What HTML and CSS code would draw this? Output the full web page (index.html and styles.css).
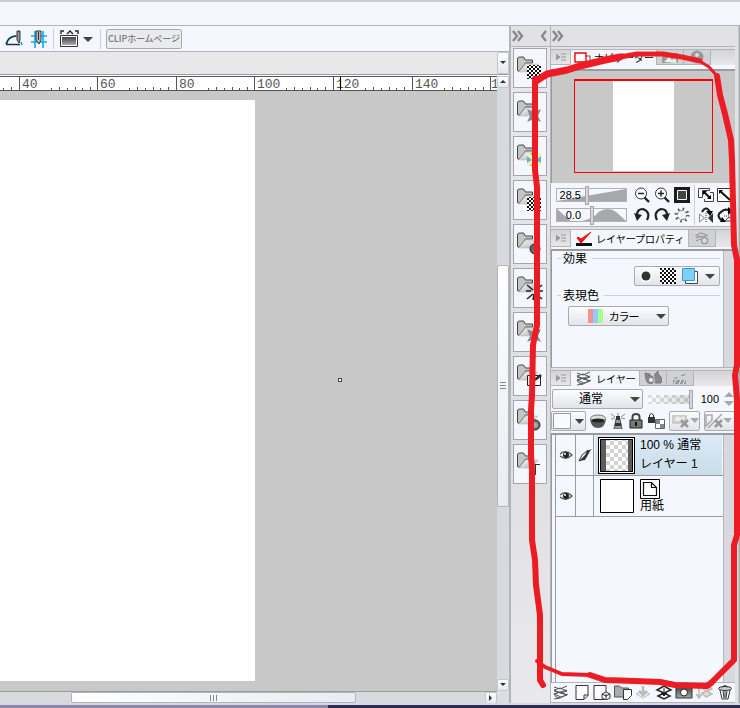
FILE: index.html
```html
<!DOCTYPE html>
<html lang="ja">
<head>
<meta charset="utf-8">
<title>レイヤー</title>
<link rel="stylesheet" href="styles.css">
</head>
<body>
<svg class="defs" aria-hidden="true">
  <defs>
    <linearGradient id="fold" x1="0" y1="0" x2="1" y2="1"><stop offset="0" stop-color="#fff"/><stop offset="1" stop-color="#aaa"/></linearGradient>
    <linearGradient id="dark" x1="0" y1="0" x2="0" y2="1"><stop offset="0" stop-color="#444"/><stop offset="1" stop-color="#aaa"/></linearGradient>
    <pattern id="check" width="4" height="4" patternUnits="userSpaceOnUse"><rect width="4" height="4" fill="#fff"/><path d="M0 0h2v2H0zM2 2h2v2H2z" fill="#111"/></pattern>
    <pattern id="pale" width="8" height="8" patternUnits="userSpaceOnUse"><rect width="8" height="8" fill="#fff"/><path d="M0 0h4v4H0zM4 4h4v4H4z" fill="#d2d2d2"/></pattern>
    <symbol id="folder" viewBox="0 0 34 40"><path d="M4.500 22V11q0-2 2-2h4l2 3h7v3h-7L7 23H5z" fill="#c4c4c4" stroke="#444"/><path d="M6 24l6-8h13l-6 8z" fill="url(#fold)" stroke="#bbb" stroke-width=".6"/><path d="M5 24l8-9" stroke="#888"/></symbol>
    <symbol id="ticks" viewBox="0 0 78 14"><path d="M31.500 11v2M39.500 10v3M47.500 11v2M55.500 10v3M62.500 11v2M70.500 10v3" stroke="#555"/></symbol>
    <symbol id="chev" viewBox="0 0 12 12"><path d="M1 1l4 5-4 5M6 1l4 5-4 5" fill="none" stroke="#888a8e" stroke-width="2.400"/></symbol>
    <symbol id="menu" viewBox="0 0 10 9"><path d="M0 1l4 3-4 3zM5 1h5M5 4h5M5 7h5" fill="#999" stroke="#999" stroke-width="1"/></symbol>
    <symbol id="eye" viewBox="0 0 14 10"><path d="M1 4Q7-1 13 5 7 11 1 6" fill="#eee" stroke="#555" stroke-width="1.200"/><circle cx="7" cy="5" r="3" fill="#222"/><circle cx="6" cy="4" r="1" fill="#fff"/></symbol>
    <symbol id="layers" viewBox="0 0 18 15"><path d="M2 2l6 2 7-3M2 5l6-2 7 3-6 2-7-3zM2 9l6-2 7 3-6 2zM2 6l13 4M15 5L2 9l2 3 4 1 8-4M8 13l-6 1" fill="none" stroke="#555" stroke-width="1"/></symbol>
  </defs>
</svg>

<header class="titlebar"></header>
<main class="app">
  <section class="document">
    <div class="toolbar">
      <button class="tool" aria-label="特殊定規にスナップ"><svg width="20" height="18" viewBox="0 0 20 18"><path d="M2 15Q2 5 13 6M16 12l1 3" fill="none" stroke="#0c9be8" stroke-width="1.500"/><path d="M1 14q2-7 10-8M1 14.500h14" fill="none" stroke="#234" stroke-width="1.600"/><path d="M12 1h3v9l-1 3-2-3z" fill="#999" stroke="#333"/></svg></button>
      <button class="tool" aria-label="グリッドにスナップ"><svg width="18" height="18" viewBox="0 0 18 18"><path d="M1 6h16M1 12h16M5 1v17M13 1v17" stroke="#0cabf5" stroke-width="1.600"/><path d="M6 1h5v9l-2 4-3-4z" fill="#bbb" stroke="#333"/><path d="M8.500 2v8" stroke="#333"/></svg></button>
      <i class="divider"></i>
      <button class="tool wide" aria-label="表示設定"><svg width="34" height="18" viewBox="0 0 34 18"><path d="M2 4V1h3M19 4V1h-3M8 4l3-3 3 3" fill="none" stroke="#222" stroke-width="1.400"/><path d="M1.500 5.500h17v11h-17z" fill="#fff" stroke="#333"/><path d="M3 7h14v8H3z" fill="url(#dark)"/><path d="M24 7h10l-5 5z" fill="#444"/></svg></button>
      <i class="divider"></i>
      <button class="home">CLIPホームページ</button>
    </div>
    <div class="doctabs"><button class="tiny" aria-label="タブ一覧"><svg width="6" height="4"><path d="M0 0h6L3 3z" fill="#333"/></svg></button></div>
    <div class="workspace">
      <div class="view">
        <div class="ruler">
          <span class="mark"><svg><use href="#ticks" x="-59" width="78" height="14"/></svg></span>
          <span class="mark"><svg><use href="#ticks" width="78" height="14"/></svg>40</span>
          <span class="mark"><svg><use href="#ticks" width="78" height="14"/></svg>60</span>
          <span class="mark"><svg><use href="#ticks" width="78" height="14"/></svg>80</span>
          <span class="mark"><svg><use href="#ticks" width="78" height="14"/></svg>100</span>
          <span class="mark"><svg><use href="#ticks" width="78" height="14"/></svg>120</span>
          <span class="mark"><svg><use href="#ticks" width="78" height="14"/></svg>140</span>
          <span class="mark last">1</span>
          <i class="position"></i>
        </div>
        <div class="canvas"><div class="page"></div><i class="cursor"></i></div>
      </div>
      <div class="vscroll">
        <button class="tiny" aria-label="上へ"><svg width="6" height="4"><path d="M0 3h6L3 0z" fill="#333"/></svg></button>
        <div class="vtrack"><i></i><div class="thumb"><svg width="6" height="8"><path d="M0 .5h6M0 3.500h6M0 6.500h6" stroke="#888"/></svg></div></div>
        <button class="tiny" aria-label="下へ"><svg width="6" height="4"><path d="M0 0h6L3 3z" fill="#333"/></svg></button>
      </div>
      <div class="hscroll">
        <div class="htrack"><i></i><div class="thumb"><svg width="8" height="6"><path d="M.5 0v6M3.500 0v6M6.500 0v6" stroke="#888"/></svg></div></div>
        <button class="tiny" aria-label="右へ"><svg width="4" height="6"><path d="M0 0v6l3-3z" fill="#333"/></svg></button>
      </div>
      <div class="corner"></div>
    </div>
  </section>

  <nav class="strip">
    <div class="dockhead"><svg width="12" height="12"><use href="#chev"/></svg><svg width="6" height="12" viewBox="0 0 6 12"><path d="M5 1L1 6l4 5" fill="none" stroke="#888a8e" stroke-width="2.400"/></svg></div>
    <div class="materials">
      <button aria-label="単色パターン"><svg viewBox="0 0 34 40"><use href="#folder"/><path d="M14 17h14v14H14z" fill="url(#check)"/></svg></button>
      <button aria-label="素材"><svg viewBox="0 0 34 40"><use href="#folder"/><path d="M14 17l7 3 7-3-3 7 3 6-7-3-7 3 3-6z" fill="#888"/></svg></button>
      <button aria-label="カラーパターン"><svg viewBox="0 0 34 40"><use href="#folder"/><path d="M14 17h14v13H14z" fill="#4db8ee"/><path d="M14 17h3l4 5 4-5h3v3l-5 4 5 3v3h-3l-4-4-4 4h-3v-3l5-3-5-4z" fill="#fff0a8"/></svg></button>
      <button aria-label="モノクロパターン"><svg viewBox="0 0 34 40"><use href="#folder"/><path d="M14 17h14v14H14z" fill="url(#check)"/></svg></button>
      <button aria-label="画像素材"><svg viewBox="0 0 34 40"><use href="#folder"/><circle cx="22" cy="25" r="5" fill="#666" stroke="#222"/></svg></button>
      <button aria-label="漫画素材"><svg viewBox="0 0 34 40"><use href="#folder"/><path d="M14 17l6 5M29 17l-6 5M14 31l6-5M29 31l-6-5M13 23h5M21 30v-4M25 23h5M20 32l1-5" stroke="#222" stroke-width="1.600"/></svg></button>
      <button aria-label="ポーズ"><svg viewBox="0 0 34 40"><use href="#folder"/><path d="M14 17l7 3 7-3-3 7 3 6-7-3-7 3 3-6z" fill="#888"/></svg></button>
      <button aria-label="ブラシ"><svg viewBox="0 0 34 40"><use href="#folder"/><path d="M14.500 19.500h13v10h-13z" fill="#fff" stroke="#222"/><path d="M20 26l2-4 5-4 2 2-5 4z" fill="#333"/></svg></button>
      <button aria-label="3D"><svg viewBox="0 0 34 40"><use href="#folder"/><circle cx="22" cy="25" r="5" fill="#777" stroke="#222"/><circle cx="22" cy="25" r="2.500" fill="#aaa"/></svg></button>
      <button aria-label="ダウンロード"><svg viewBox="0 0 34 40"><use href="#folder"/><path d="M16 20.500h11M22.500 20v11" stroke="#333"/></svg></button>
    </div>
  </nav>

  <aside class="dock">
    <div class="dockhead"><svg width="12" height="12"><use href="#chev"/></svg></div>
    <section class="panel navigator">
      <div class="tabs">
        <button class="menu" aria-label="メニュー"><svg width="10" height="9"><use href="#menu"/></svg></button>
        <button class="tab active"><svg width="17" height="12" viewBox="0 0 17 12"><path d="M11 4h5v6h-5" fill="#fff" stroke="#555"/><path d="M1 1h11v9H1z" fill="#fff" stroke="#f00" stroke-width="1.400"/></svg>ナビゲーター</button>
        <button class="tab" aria-label="サブビュー"><svg width="20" height="12" viewBox="0 0 20 12"><path d="M2 2h16v10H2z" fill="#999"/><path d="M4 11l5-5 3 3 3-2 2 5z" fill="#eee"/></svg></button>
        <button class="tab" aria-label="情報"><svg width="16" height="14" viewBox="0 0 16 14"><circle cx="8" cy="7" r="6.500" fill="#999"/><circle cx="8" cy="5" r="2" fill="#ddd"/><path d="M6 9h4v4H6z" fill="#ddd"/></svg></button>
      </div>
      <div class="preview"><div class="frame"><div class="paper"></div></div></div>
      <div class="controls">
        <div class="sliders">
          <label class="slider"><span>28.5</span><svg viewBox="0 0 70 12" preserveAspectRatio="none"><path d="M0 12L70 0v12z" fill="#a6a8ab"/></svg><input type="range" min="0" max="100" value="43" aria-label="拡大率"></label>
          <label class="slider"><span>0.0</span><svg viewBox="0 0 70 12" preserveAspectRatio="none"><path d="M0 0l14 12H0zM7 12h19Q38 9 42 3 52-3 60 3l10 9z" fill="#a6a8ab"/></svg><input type="range" min="0" max="100" value="50" aria-label="回転"></label>
        </div>
        <div class="navtools">
          <button aria-label="ズームアウト"><svg viewBox="0 0 16 16"><circle cx="7" cy="6.500" r="5.500" fill="#fff" stroke="#333"/><path d="M4 6.500h6" stroke="#222" stroke-width="1.500"/><path d="M10.500 10.500L15 15" stroke="#222" stroke-width="2.400"/></svg></button>
          <button aria-label="ズームイン"><svg viewBox="0 0 16 16"><circle cx="7" cy="6.500" r="5.500" fill="#fff" stroke="#333"/><path d="M4 6.500h6M7 3.500v6" stroke="#222" stroke-width="1.500"/><path d="M10.500 10.500L15 15" stroke="#222" stroke-width="2.400"/></svg></button>
          <button aria-label="全体表示"><svg viewBox="0 0 16 16"><path d="M0 0h16v16H0z" fill="#1c1c1c"/><path d="M3.500 3.500h9v9h-9z" fill="#444" stroke="#fff"/></svg></button>
          <button class="split" aria-label="フィッティング"><svg viewBox="0 0 16 16"><path d="M.5 2.500v-1h11v2h-7v7h-4zM12 5.500h3.500v9H6.500V12" fill="none" stroke="#444"/><path d="M6 5l6 6" stroke="#111" stroke-width="2"/><path d="M5 4h4l-4 4zM13 12H9l4-4z"/></svg></button>
          <button aria-label="ウィンドウに合わせる"><svg viewBox="0 0 16 16"><path d="M.5 1.500h15v13H.5z" fill="#fff" stroke="#333"/><path d="M3 4l10 9" stroke="#111" stroke-width="2"/><path d="M2 3h4l-4 4z"/></svg></button>
          <button aria-label="左回転"><svg viewBox="0 0 16 16"><path d="M3 8q0-6 6-6 8 3 4 11" fill="none" stroke="#222" stroke-width="2.200"/><path d="M0 6l8 2-5 6z" fill="#222"/></svg></button>
          <button aria-label="右回転"><svg viewBox="0 0 16 16"><path d="M13 8q0-6-6-6-8 3-4 11" fill="none" stroke="#222" stroke-width="2.200"/><path d="M16 6L8 8l5 6z" fill="#222"/></svg></button>
          <button aria-label="回転をリセット"><svg viewBox="0 0 16 16"><circle cx="8" cy="8" r="6" fill="none" stroke="#555" stroke-width="3" stroke-dasharray="1.500 3.200"/><circle cx="8" cy="8" r="4.500" fill="none" stroke="#777" stroke-dasharray="2.500 2.200"/></svg></button>
          <button class="split" aria-label="左右反転"><svg viewBox="0 0 16 16"><path d="M8 6v10" stroke="#222" stroke-dasharray="1 1"/><path d="M1.500 7v8l5-4z" fill="#fff" stroke="#888"/><path d="M10 11l5-5v10z" fill="#333"/><path d="M4 5q4-7 8 0" fill="none" stroke="#222" stroke-width="2.200"/><path d="M8 4h7l-3 5z"/></svg></button>
          <button aria-label="上下反転"><svg viewBox="0 0 16 16"><path d="M4 13Q-1 8 4 5q4-4 9-1" fill="none" stroke="#222" stroke-width="2.200"/><path d="M11 0v8l5-4zM3 15h6l-4-5z"/><path d="M7 9h9" stroke="#333" stroke-dasharray="1 1"/><path d="M8 14h8l-4-4z" fill="#fff" stroke="#444"/></svg></button>
        </div>
      </div>
    </section>

    <section class="panel property">
      <div class="tabs">
        <button class="menu" aria-label="メニュー"><svg width="10" height="9"><use href="#menu"/></svg></button>
        <button class="tab active"><svg width="18" height="16" viewBox="0 0 18 16"><path d="M1 12h16v3H1z" fill="#111"/><path d="M2 7l4 5L16 1 6 8 3 6z" fill="#e11" stroke="#e11"/></svg>レイヤープロパティ</button>
        <button class="tab" aria-label="レイヤー検索"><svg width="18" height="13" viewBox="0 0 18 15"><path d="M2 4l6-3 7 3-6 2zM2 7l6-2 5 2M2 10l6-2" fill="none" stroke="#999" stroke-width="1.300"/><circle cx="12" cy="10" r="3.500" fill="#ddd" stroke="#999" stroke-width="1.500"/></svg></button>
      </div>
      <div class="framed">
        <div class="fields">
          <h2>効果</h2>
          <div class="effects">
            <button aria-label="境界効果"><svg width="14" height="14"><circle cx="7" cy="7" r="6" fill="#fff"/><circle cx="7" cy="7" r="4.500" fill="#333"/></svg></button>
            <button aria-label="トーン"><svg width="16" height="16"><path d="M0 0h16v16H0z" fill="url(#check)"/></svg></button>
            <button aria-label="レイヤーカラー"><svg width="16" height="16" viewBox="0 0 16 16"><path d="M3.500 3.500h12v12h-12z" fill="#fff" stroke="#444"/><path d="M.5.500h12v12H.5z" fill="#80d0ff" stroke="#3b9acb"/></svg></button>
            <button aria-label="その他"><svg width="10" height="5"><path d="M0 0h10L5 5z" fill="#444"/></svg></button>
          </div>
          <h2>表現色</h2>
          <div class="colour"><i class="swatch"></i><select aria-label="表現色"><option>カラー</option></select><svg width="10" height="5"><path d="M0 0h10L5 5z" fill="#444"/></svg></div>
        </div>
        <div class="gutter"></div>
      </div>
    </section>

    <section class="panel layers">
      <div class="tabs">
        <button class="menu" aria-label="メニュー"><svg width="10" height="9"><use href="#menu"/></svg></button>
        <button class="tab active"><svg width="18" height="15"><use href="#layers"/></svg>レイヤー</button>
        <button class="tab" aria-label="ヒストリー"><svg width="18" height="14" viewBox="0 0 18 14"><path d="M1 2l5 1-2 2q2-2 5 1v6q-6 2-7-4zM10 4l4-4v3q5 3 3 9h-6" fill="#888" stroke="#777"/><circle cx="7" cy="9" r="2" fill="#eee"/></svg></button>
        <button class="tab" aria-label="オートアクション"><svg width="16" height="12" viewBox="0 0 16 12"><path d="M1 6l5-1-2 2zM8 4l6-3-2 3zM1 8h13v4H1z" fill="#999"/><path d="M4 8l-2 4M9 8l-2 4M13 8l-2 4" stroke="#eee"/></svg></button>
      </div>
      <div class="blend">
        <div class="mode"><select aria-label="合成モード"><option>通常</option></select><svg width="10" height="5"><path d="M0 0h10L5 5z" fill="#444"/></svg></div>
        <input class="opacity" type="range" min="0" max="100" value="100" aria-label="不透明度">
        <output>100</output>
        <svg width="10" height="14"><path d="M0 5h10L5 0zM0 9h10l-5 5z" fill="#a6a8ab"/></svg>
      </div>
      <div class="locks">
        <button class="palette" aria-label="パレットカラー"><svg width="32" height="16"><path d="M.5.500h17v15H.5z" fill="#f7faff" stroke="#999"/><path d="M22 6h9l-4.500 5z" fill="#444"/></svg></button>
        <button aria-label="クリッピング"><svg width="16" height="14" viewBox="0 0 16 14"><path d="M0 5q1 9 8 9t8-9z" fill="#555"/><ellipse cx="8" cy="4.500" rx="7.500" ry="3.500" fill="#ddd" stroke="#777"/><ellipse cx="8" cy="6.500" rx="6.500" ry="2" fill="#222"/></svg></button>
        <button aria-label="参照レイヤー"><svg width="16" height="16" viewBox="0 0 16 16"><path d="M6 6h4l2 10H4z" fill="#999" stroke="#555"/><path d="M6 3h4v4H6zM5 10h6v3H5z" fill="#333"/><path d="M8 0v3M1 1l4 3M15 1l-4 3M1 6l4-1M15 6l-4-1" stroke="#888"/></svg></button>
        <button aria-label="ロック"><svg width="14" height="16" viewBox="0 0 14 16"><path d="M3.500 7V4q0-3 3.500-3t3.500 3v3" fill="none" stroke="#444" stroke-width="2"/><path d="M1 7h12v8H1z" fill="#777" stroke="#222"/><path d="M7 9v4" stroke="#111" stroke-width="2"/></svg></button>
        <button aria-label="透明ピクセルをロック"><svg width="18" height="16" viewBox="0 0 18 16"><path d="M2.500 4V2q2-3 4 0v2" fill="none" stroke="#222"/><path d="M1 4h7v6H1z" fill="#333"/><path d="M8.500 6.500h9v9h-9z" fill="#fff" stroke="#666"/><path d="M9 7h4v4H9zM13 11h4v4h-4z" fill="#888"/></svg></button>
        <button class="boxed" aria-label="マスク"><svg width="28" height="16" viewBox="0 0 28 16"><path d="M1 2h15v9H1z" fill="#ccc"/><path d="M4 5l3-2 2 2 4-2v5H4z" fill="#eee"/><path d="M10 7l7 7M17 7l-7 7" stroke="#999" stroke-width="2.500"/><path d="M19 5h9l-4 5z" fill="#aaa"/></svg></button>
        <button class="boxed" aria-label="定規"><svg width="28" height="16" viewBox="0 0 28 16"><path d="M1 13V2h6v5zM17 1L3 15" fill="none" stroke="#aaa" stroke-width="1.500"/><path d="M10 7l7 7M17 7l-7 7" stroke="#999" stroke-width="2.500"/><path d="M18 5h9l-4 5z" fill="#aaa"/></svg></button>
      </div>
      <div class="list">
        <ul>
          <li class="selected">
            <button class="cell" aria-label="表示"><svg width="14" height="10"><use href="#eye"/></svg></button>
            <span class="cell"><svg width="14" height="14" viewBox="0 0 14 14"><path d="M1 13L4 7l6-5 1 2-4 6z" fill="#fff" stroke="#333"/><path d="M1 13l6-1 5-9 2-2-5 2-2 4z" fill="#333"/></svg></span>
            <div class="row"><svg class="thumbnail" width="37" height="37" viewBox="0 0 37 37"><path d="M0 0h37v37H0z"/><path d="M1.500 1.500h34v34h-34z" fill="#5c5c5c" stroke="#fff"/><path d="M8 3h22v32H8z" fill="url(#pale)"/><path d="M2.500 2.500h32v32h-32z" fill="none" stroke="#000"/></svg><p>100 % 通常<br>レイヤー 1</p></div>
          </li>
          <li>
            <button class="cell" aria-label="表示"><svg width="14" height="10"><use href="#eye"/></svg></button>
            <span class="cell"></span>
            <div class="row"><svg class="thumbnail" width="37" height="37"><path d="M2.500 1.500h33v33h-33z" fill="#fff" stroke="#000"/></svg><p class="sheet"><svg width="20" height="20" viewBox="0 0 20 20"><path d="M.5.500h19v19H.5z" fill="#fff" stroke="#000"/><path d="M3.500 3.500h8l5 5v8h-13zM11.500 3.500v5h5" fill="#fff" stroke="#111" stroke-width="1.200"/></svg>用紙</p></div>
          </li>
        </ul>
        <div class="gutter"></div>
      </div>
      <div class="actions">
        <button aria-label="パレットを2つに分割"><svg viewBox="0 0 18 15"><use href="#layers"/></svg></button>
        <button aria-label="新規ラスターレイヤー"><svg viewBox="0 0 18 15"><path d="M3 .5h12v10l-4 4H3zM15 10h-4v4" fill="#fff" stroke="#333"/></svg></button>
        <button aria-label="新規ベクターレイヤー"><svg viewBox="0 0 18 15"><path d="M1 .5h12v14H1z" fill="#fff" stroke="#333"/><path d="M9 9l4-2 4 2v4l-4 2-4-2zM9 9l4 2 4-2M13 11v4" fill="#fff" stroke="#333"/></svg></button>
        <button aria-label="新規フォルダー"><svg viewBox="0 0 18 15"><path d="M.5 1h5l2 2h7v9H.5z" fill="#aaa" stroke="#555"/><path d="M9.500 4.500h8v6l-4 4h-4z" fill="#fff" stroke="#333"/></svg></button>
        <button aria-label="下のレイヤーに転写"><svg viewBox="0 0 18 15"><path d="M2 9l7-3 7 3-7 4z" fill="#eee" stroke="#bbb"/><path d="M9 1v7M5 6l4 4 4-4" fill="none" stroke="#bbb" stroke-width="2.500"/></svg></button>
        <button aria-label="下のレイヤーに結合"><svg viewBox="0 0 18 15"><path d="M2 5l7-4 7 4-7 3zM3 11l6-3 6 3-6 3z" fill="#fff" stroke="#222" stroke-width="1.500"/><path d="M9 3v6M6 8l3 3 3-3z" fill="#222" stroke="#222"/></svg></button>
        <button aria-label="レイヤーマスクを作成"><svg viewBox="0 0 18 15"><path d="M1 2h16v11H1z" fill="url(#dark)" stroke="#333"/><circle cx="9" cy="7.500" r="3.500" fill="#fff" stroke="#222"/></svg></button>
        <button aria-label="マスクをレイヤーに適用"><svg viewBox="0 0 18 15"><path d="M3 1v11M0 9l3 4 3-4M7 4l6-3 3 3-5 2zM6 8l5-2 5 3-6 3z" fill="#ddd" stroke="#bbb" stroke-width="1.500"/></svg></button>
        <button aria-label="レイヤーを削除"><svg viewBox="0 0 18 15"><path d="M4 5l2 9h6l2-9M7 6l1 7M11 6l-1 7M9 6v7" fill="#fff" stroke="#333"/><ellipse cx="9" cy="3.500" rx="6.500" ry="2" fill="#ccc" stroke="#333"/><path d="M6 2q3-3 6 0" fill="none" stroke="#333"/></svg></button>
      </div>
    </section>
  </aside>
</main>
<footer class="taskline"></footer>

<svg class="markup" viewBox="0 0 740 708" aria-hidden="true">
  <g fill="none" stroke="#ed1c24" stroke-linejoin="round" stroke-linecap="round">
    <path stroke-width="6" d="M535 79V170L537 187V325L533 345 532 395 531 410V455L532 470V540L535 560 536 585 540 615V680L543 685"/>
    <path stroke-width="7" d="M536 81L547 74 567 70 580 66 605 60 620 57"/>
    <path stroke-width="5" d="M620 57L637 54 663 54 682 57 700 61"/>
    <path stroke-width="3" d="M698 60L709 67 717 76"/>
    <path stroke-width="6" d="M717 76L720 95 725 114 731 140 732 160 734 245 737 260 737 365 735 375 737 400 737 535 734 545V660L711 683"/>
    <path stroke-width="6" d="M711 683L707 686 675 685 660 682 635 681 605 680 590 675"/>
    <path stroke-width="4" d="M590 675L562 674 545 667 537 661"/>
  </g>
</svg>
</body>
</html>
```

FILE: styles.css
```css
* { box-sizing: border-box; }

:root {
  --pale: #f4f8fe;
  --grey: #e6e6e8;
  --line: #b2b4b9;
  --mid: #999b9f;
  --canvas: #c8c8c8;
}

body {
  margin: 0;
  min-height: 100vh;
  display: flex;
  flex-direction: column;
  background: var(--grey);
  color: #000;
  font: 12px/16px "Liberation Sans", "Noto Sans CJK JP", sans-serif;
  font-feature-settings: "palt";
  overflow: hidden;
}

button, select, input { font: inherit; color: inherit; }
button { margin: 0; padding: 0; border: 0; background: none; display: flex; align-items: center; justify-content: center; }
svg { display: block; flex: none; }
.defs { position: absolute; width: 0; height: 0; }

.titlebar { height: 26px; background: var(--pale); border-top: 2px solid #ccc; border-bottom: 1px solid var(--line); }
.app { flex: 1; display: flex; height: calc(100vh - 31px); }

/* document window */
.document { flex: 1; min-width: 0; display: flex; flex-direction: column; border-right: 2px solid var(--line); }
.toolbar { height: 26px; display: flex; align-items: center; gap: 5px; padding-left: 5px; background: var(--pale); border-bottom: 1px solid var(--line); }
.divider { width: 1px; height: 20px; background: #ccced2; }
.wide { padding: 0 2px 0 0; }
.home { height: 20px; padding: 0 1px; border: 1px solid #aaa; border-radius: 2px; background: #eaebee; color: #777; font-family: "Noto Sans CJK JP", sans-serif; font-size: 9px; font-weight: 500; line-height: 16px; white-space: nowrap; }
.doctabs { height: 23px; display: flex; justify-content: flex-end; background: #e8e8ea; border-bottom: 1px solid var(--mid); }
.tiny { width: 12px; min-height: 12px; flex: none; border: 1px solid #c4c6cc; border-radius: 2px; background: linear-gradient(#fff, #e4e8f0); }
.workspace { flex: 1; min-height: 0; display: grid; grid-template: 1fr 12px / 1fr 12px; padding-top: 1px; background: #fff; }
.view { display: flex; flex-direction: column; min-width: 0; }
.ruler { position: relative; height: 15px; display: grid; grid-template-columns: 19px 78px 79px 78px 79px 79px 78px 1fr; background: #fff; border-top: 1px solid #555; border-bottom: 1px solid #555; }
.mark { position: relative; padding-left: 2px; border-left: 1px solid #555; color: #555; font: 13px/15px "Liberation Mono", monospace; }
.mark:first-child { border: 0; overflow: hidden; }
.last { padding: 0; overflow: hidden; }
.mark svg { position: absolute; left: 0; top: 0; width: 78px; height: 14px; }
.mark:first-child svg { width: 19px; }
.position { position: absolute; left: 340px; top: 0; width: 1px; height: 13px; background: #000; }
.canvas { position: relative; flex: 1; padding: 9px 0 10px; background: var(--canvas); }
.page { width: 255px; height: 100%; background: #fff; }
.cursor { position: absolute; left: 338px; top: 287px; width: 4px; height: 4px; border: 1px solid #444; background: #fff; }
.vscroll { display: flex; flex-direction: column; background: #d8dae0; }
.vtrack { flex: 1; display: grid; grid-template-rows: 177fr 242fr 172fr; }
.thumb { display: flex; align-items: center; justify-content: center; border: 1px solid var(--line); border-radius: 2px; background: linear-gradient(135deg, #fff, #e8ebf2); }
.hscroll { display: flex; background: #d8dae0; border-top: 1px solid var(--mid); }
.htrack { flex: 1; display: grid; grid-template-columns: 71fr 285fr 129fr; }
.corner { background: #dcdee3; }

/* material strip */
.strip { width: 40px; flex: none; background: linear-gradient(#e9e9eb, #dfdfe1 60%, #e9e9eb); border-right: 1px solid var(--line); }
.dockhead { height: 21px; display: flex; align-items: center; justify-content: space-between; padding: 0 3px 0 1px; background: #e2e2e4; border-bottom: 1px solid var(--line); }
.materials { display: grid; gap: 4px; padding: 1px 3px 0 2px; }
.materials button { height: 40px; background: var(--pale); outline: 1px solid #a4a6ac; outline-offset: -1px; }
.materials svg { width: 34px; height: 40px; }

/* palettes */
.dock { width: 189px; flex: none; display: flex; flex-direction: column; padding-right: 5px; background: linear-gradient(90deg, #e2e2e4 187px, #a8aab0 188px); }
.dock .dockhead { margin-bottom: 2px; }
.panel { background: var(--pale); border-bottom: 1px solid var(--line); margin-bottom: 2px; }
.tabs { display: flex; height: 16px; background: linear-gradient(#d4d4d7, #e8e8ea); border-top: 1px solid var(--line); }
.menu { width: 19px; border-bottom: 1px solid var(--line); }
.tab { min-width: 27px; overflow: hidden; border: solid var(--line); border-width: 0 1px 1px 0; background: #d0d1d4; }
.tab.active { gap: 3px; padding: 0 3px 0 4px; background: var(--pale); border-width: 0 1px; font: 10px/15px "Noto Sans CJK JP", sans-serif; white-space: nowrap; }
.navigator .tab.active { width: 87px; }
.preview { display: flex; align-items: center; justify-content: center; height: 114px; margin-top: 4px; border-top: 2px solid var(--mid); border-left: 1px solid var(--mid); background: var(--canvas); padding-bottom: 3px; }
.frame { display: flex; justify-content: center; width: 139px; height: 94px; border: 1px solid #f00; border-top-width: 2px; }
.paper { width: 61px; height: 90px; background: #fff; }
.controls { display: flex; gap: 5px; height: 43px; padding: 2px 0 0 5px; overflow: hidden; }
.sliders { display: grid; grid-auto-rows: 20px; width: 71px; flex: none; }
.slider { position: relative; display: flex; align-items: center; justify-content: flex-start; height: 14px; margin-top: 3px; border: 1px solid #b0b2b6; font: 11px/12px "Liberation Sans", sans-serif; }
.slider svg { position: absolute; inset: 0; width: 100%; height: 100%; }
.slider span { position: relative; z-index: 1; width: 24px; text-align: right; }
input[type="range"] { appearance: none; margin: 0; background: none; }
.slider input { position: absolute; left: 0; top: -3px; width: 100%; height: 18px; }
input[type="range"]::-webkit-slider-thumb { appearance: none; width: 4px; height: 19px; background: #d4d5d8; border: 1px solid #a6a8ac; }
.navtools { display: grid; grid-template-columns: repeat(3, 20px) 24px 18px; grid-auto-rows: 20px; min-width: 0; }
.navtools svg { width: 16px; height: 16px; }
.split { border-left: 1px solid #ccd; margin-left: 2px; }

.property .tabs { height: 18px; }
.framed { display: flex; height: 118px; margin-top: 2px; border-top: 2px solid var(--mid); border-left: 1px solid var(--mid); }
.fields { flex: 1; padding: 0 3px 0 5px; }
.gutter { width: 12px; flex: none; background: #d8d9de; border-left: 1px solid var(--line); }
h2 { display: flex; align-items: center; gap: 5px; margin: 0; font: 12px/14px "Noto Sans CJK JP", sans-serif; }
h2::before, h2::after { content: ""; height: 1px; background: #ccd0d8; }
h2::before { width: 4px; margin-right: -3px; }
h2::after { flex: 1; }
.effects, .colour, .mode, .boxed, .palette { display: flex; align-items: center; border: 1px solid #a9abb0; border-radius: 2px; background: linear-gradient(#fbfcff, #e2e4e9); }
.effects { width: 86px; height: 20px; margin: 1px 0 2px auto; padding: 0 4px; justify-content: space-between; }
select { appearance: none; border: 0; padding: 0; margin: 0; background: none; flex: 1; }
.colour { width: 101px; height: 20px; margin: 4px 0 0 11px; padding: 0 2px 0 19px; gap: 6px; font-family: "Noto Sans CJK JP", sans-serif; font-size: 11px; }
.swatch { width: 15px; height: 14px; background: linear-gradient(90deg, #ff9090 5px, #90ccff 5px 10px, #a8ff90 10px); }

.layers { flex: 1; min-height: 0; display: flex; flex-direction: column; margin: 0; }
.layers .tabs { flex: none; }
.blend { display: flex; align-items: center; gap: 5px; padding: 3px 1px 0; }
.mode { width: 91px; height: 20px; padding: 0 2px 0 26px; }
input.opacity { width: 45px; height: 19px; padding: 5px 0; background: linear-gradient(90deg, #fff8, #bbb8), repeating-conic-gradient(#bbb 0 25%, #fff 0 50%) 0 0 / 8px 8px; background-clip: content-box; }
.opacity::-webkit-slider-thumb { margin: -5px 0; }
.blend output { flex: 1; text-align: right; font-size: 11px; }
.locks { display: flex; align-items: center; justify-content: space-between; padding: 2px 0; overflow: hidden; }
.boxed, .palette { height: 20px; }
.palette { width: 35px; }
.boxed { width: 31px; }
.list { flex: 1; min-height: 0; display: flex; border-top: 2px solid var(--mid); border-left: 1px solid var(--mid); border-bottom: 1px solid var(--line); padding-left: 3px; }
ul { flex: 1; margin: 0; padding: 0; list-style: none; border-left: 1px solid var(--mid); }
li { display: grid; grid-template-columns: 20px 18px 1fr; height: 41px; border-bottom: 1px solid var(--mid); }
.cell { display: flex; align-items: center; justify-content: center; border-right: 1px solid var(--mid); }
.row { display: flex; align-items: center; gap: 5px; padding-left: 4px; }
.row p { margin: 0; font: 12px/19px "Liberation Sans", "Noto Sans CJK JP", sans-serif; white-space: nowrap; }
.row .sheet { line-height: 14px; }
.selected .row { margin: 0 1px; background: linear-gradient(#dceaf6, #c9dde8); padding-left: 3px; }
.actions { display: flex; justify-content: space-between; height: 19px; }
.actions button { width: 20px; }
.actions svg { width: 18px; height: 15px; }

.taskline { height: 5px; border-top: 2px solid #d8dade; background: linear-gradient(90deg, #8d87ad 328px, #302c56 328px); }
.markup { position: absolute; left: 0; top: 0; width: 740px; height: 708px; pointer-events: none; }
```
